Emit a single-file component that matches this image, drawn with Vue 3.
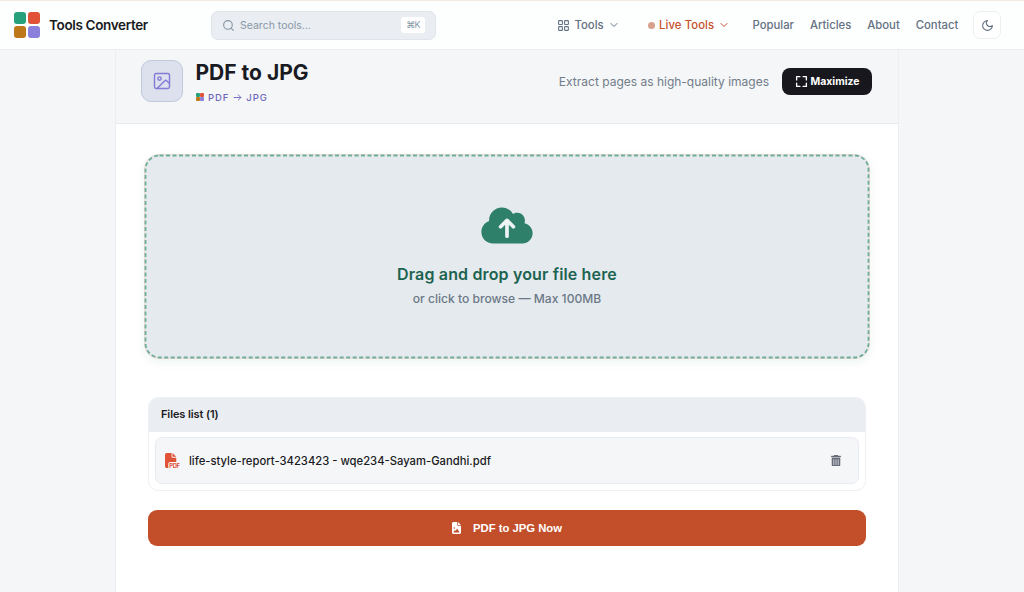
<template>
  <div class="page">
    <!-- Top navigation -->
    <header class="navbar">
      <div class="brand">
        <div class="logo"><i class="green"></i><i class="red"></i><i class="amber"></i><i class="violet"></i></div>
        <span class="brand-name">Tools Converter</span>
      </div>

      <div class="search">
        <svg class="search-icon" viewBox="0 0 24 24"><circle cx="11" cy="11" r="8" /><path d="m21 21-4.3-4.3" /></svg>
        <span class="search-text">Search tools...</span>
        <kbd>⌘K</kbd>
      </div>

      <nav>
        <a class="nav-tools">
          <svg class="grid-icon" viewBox="0 0 24 24">
            <rect x="3" y="3" width="7" height="7" rx="1" /><rect x="14" y="3" width="7" height="7" rx="1" />
            <rect x="3" y="14" width="7" height="7" rx="1" /><rect x="14" y="14" width="7" height="7" rx="1" />
          </svg>
          <span>Tools</span>
          <svg class="chevron" viewBox="0 0 24 24"><path d="m6 9 6 6 6-6" /></svg>
        </a>
        <a class="nav-live">
          <i class="dot"></i>
          <span>Live Tools</span>
          <svg class="chevron" viewBox="0 0 24 24"><path d="m6 9 6 6 6-6" /></svg>
        </a>
        <a v-for="link in links" :key="link" class="nav-link">{{ link }}</a>
      </nav>

      <button class="theme">
        <svg viewBox="0 0 24 24"><path d="M12 3a6 6 0 0 0 9 9 9 9 0 1 1-9-9Z" /></svg>
      </button>
    </header>

    <main class="panel">
      <!-- Tool title bar -->
      <section class="tool-header">
        <div class="tool-icon">
          <svg viewBox="0 0 24 24">
            <rect x="3" y="3" width="18" height="18" rx="2" /><circle cx="9" cy="9" r="2" />
            <path d="m21 15-3.1-3.1a2 2 0 0 0-2.8 0L6 21" />
          </svg>
        </div>
        <div class="tool-title">
          <h1>PDF to JPG</h1>
          <div class="route">
            <div class="logo small"><i class="green"></i><i class="red"></i><i class="amber"></i><i class="violet"></i></div>
            <span>PDF</span>
            <svg viewBox="0 0 24 24"><path d="M3 12h18m-7-7 7 7-7 7" /></svg>
            <span>JPG</span>
          </div>
        </div>
        <p class="tool-desc">Extract pages as high-quality images</p>
        <button class="maximize">
          <svg viewBox="0 0 24 24"><path d="M3 9V3h6M15 3h6v6M21 15v6h-6M9 21H3v-6" /></svg>
          <span>Maximize</span>
        </button>
      </section>

      <section class="tool-body">
        <!-- Drop zone -->
        <div class="dropzone">
          <svg class="dash" width="726" height="205"><rect x="1.5" y="1.5" width="723" height="202" rx="14" /></svg>
          <svg class="cloud" viewBox="0 0 640 512">
            <path d="M144 480C64.500 480 0 415.500 0 336c0-62.800 40.200-116.200 96.200-135.900-.1-2.700-.2-5.400-.2-8.100 0-88.400 71.600-160 160-160 59.300 0 111 32.200 138.700 80.200C409.900 102 428.300 96 448 96c53 0 96 43 96 96 0 12.200-2.300 23.800-6.400 34.600C596 238.400 640 290.100 640 352c0 70.700-57.300 128-128 128H144z" />
            <path class="arrow" d="M320 390V192m-80 80 80-80 80 80" />
          </svg>
          <h2>Drag and drop your file here</h2>
          <p>or click to browse — Max 100MB</p>
        </div>

        <!-- Selected files -->
        <div class="files">
          <div class="files-head">Files list ({{ files.length }})</div>
          <div v-for="file in files" :key="file" class="file-row">
            <svg class="pdf" viewBox="0 0 512 512">
              <path d="M0 64C0 28.700 28.700 0 64 0h160v128c0 17.700 14.300 32 32 32h128v144H176c-35.300 0-64 28.700-64 64v144H64c-35.300 0-64-28.700-64-64V64zm384 64H256V0z" />
              <text x="148" y="510" textLength="364">PDF</text>
            </svg>
            <span class="file-name">{{ file }}</span>
            <svg class="trash" viewBox="0 0 448 512">
              <path d="M135 18c5-11 16-18 29-18h120c13 0 24 7 29 18l7 14h96c18 0 32 14 32 32s-14 32-32 32H32C14 96 0 82 0 64s14-32 32-32h96zM32 128h384v320c0 35-29 64-64 64H96c-35 0-64-29-64-64zm96 64c-9 0-16 7-16 16v224a16 16 0 0 0 32 0V208c0-9-7-16-16-16zm96 0c-9 0-16 7-16 16v224a16 16 0 0 0 32 0V208c0-9-7-16-16-16zm96 0c-9 0-16 7-16 16v224a16 16 0 0 0 32 0V208c0-9-7-16-16-16z" />
            </svg>
          </div>
        </div>

        <button class="convert">
          <svg viewBox="0 0 384 512">
            <path fill-rule="evenodd" d="M64 0C29 0 0 29 0 64v384c0 35 29 64 64 64h256c35 0 64-29 64-64V160H256c-18 0-32-14-32-32V0zm192 0v128h128zM64 256a32 32 0 1 1 64 0 32 32 0 1 1-64 0zm152 32c5 0 11 3 14 7l86 127c9 12 0 26-14 26H80c-14 0-22-15-13-27l48-64c6-8 19-8 26 0l17 22 44-84c3-4 9-7 14-7z" />
          </svg>
          <span>PDF to JPG Now</span>
        </button>
      </section>
    </main>
  </div>
</template>

<script setup>
import { ref } from 'vue'

const links = ['Popular', 'Articles', 'About', 'Contact']

// Files waiting to be converted
const files = ref(['life-style-report-3423423 - wqe234-Sayam-Gandhi.pdf'])
</script>

<style>
body {
  margin: 0;
  background: #f5f6f8;
  overflow: hidden;
}
</style>

<style scoped>
.page {
  height: 592px;
  box-sizing: border-box;
  overflow: hidden;
  background: #f5f6f8;
  font-family: Inter, sans-serif;
  color: #191a22;
}

.page * {
  box-sizing: border-box;
}

svg {
  fill: none;
  stroke: currentColor;
  stroke-width: 2;
  stroke-linecap: round;
  stroke-linejoin: round;
  flex: none;
  display: block;
}

button {
  border: 0;
  padding: 0;
  font-family: inherit;
  display: flex;
  align-items: center;
  justify-content: center;
}

/* Navbar */
.navbar {
  height: 50px;
  background: #fdfefe;
  border-top: 1px solid #f5e9e2;
  border-bottom: 1px solid #e9ecf0;
  display: flex;
  align-items: center;
  padding: 0 23px 0 14px;
}

.brand {
  display: flex;
  align-items: center;
  width: 197px;
  gap: 9px;
}

.logo {
  display: grid;
  grid-template-columns: 12px 12px;
  grid-auto-rows: 12px;
  gap: 2px;
}

.logo i {
  border-radius: 3px;
}

.green { background: #26a17b; }
.red { background: #e05336; }
.amber { background: #be7719; }
.violet { background: #8a7fda; }

.brand-name {
  font-size: 13.500px;
  font-weight: 600;
  letter-spacing: -0.35px;
  white-space: nowrap;
}

.search {
  width: 225px;
  height: 29px;
  border: 1px solid #dfe4ea;
  border-radius: 7px;
  background: #eaedf2;
  display: flex;
  align-items: center;
  padding: 0 10px;
  color: #8797a5;
  font-size: 10.500px;
}

.search-icon {
  width: 13px;
  margin-right: 5px;
}

.search-text {
  flex: 1;
}

kbd {
  width: 24px;
  height: 16px;
  line-height: 16px;
  background: #fff;
  border-radius: 3px;
  text-align: center;
  font-family: Inter, sans-serif;
  font-size: 9px;
  letter-spacing: -0.9px;
}

nav {
  display: flex;
  align-items: center;
  margin-left: 121px;
  flex: 1;
  gap: 16px;
  color: #647283;
  font-size: 11.300px;
  font-weight: 500;
  white-space: nowrap;
}

nav a {
  display: flex;
  align-items: center;
}

.nav-tools {
  width: 75px;
}

.grid-icon {
  width: 13px;
  margin-right: 4.500px;
}

.chevron {
  width: 12px;
  margin-left: 4px;
}

.nav-live {
  width: 88.500px;
  color: #c6502c;
}

.nav-live span {
  letter-spacing: 0.1px;
}

.dot {
  width: 7px;
  height: 7px;
  border-radius: 50%;
  background: #d7a08c;
  margin-right: 4px;
}

.theme {
  width: 28px;
  height: 28px;
  border: 1px solid #eceff2;
  border-radius: 7px;
  background: #fff;
  color: #647283;
}

.theme svg {
  width: 13px;
}

/* Panel */
.panel {
  width: 784px;
  height: 542px;
  margin-left: 115px;
  background: #fff;
  border: solid #eceef1;
  border-width: 0 1px;
}

.tool-header {
  height: 74px;
  background: #f5f6f8;
  border-bottom: 1px solid #e8eaee;
  display: flex;
  align-items: center;
  padding: 0 26px 11px 25px;
}

.tool-icon {
  width: 42px;
  height: 42px;
  border: 1px solid #bfcbdc;
  border-radius: 10px;
  background: #dde0ed;
  color: #857bd7;
  display: flex;
  align-items: center;
  justify-content: center;
}

.tool-icon svg {
  width: 20px;
  stroke-width: 1.700;
}

.tool-title {
  margin-left: 12.500px;
  flex: 1;
}

h1 {
  margin: 1px 0 0;
  font-size: 21px;
  line-height: 26px;
  font-weight: 700;
}

.route {
  display: flex;
  align-items: center;
  gap: 4px;
  margin-top: 5px;
  height: 12px;
  color: #6f67bc;
  font-size: 9.500px;
  font-weight: 500;
  letter-spacing: 0.9px;
}

.route svg {
  width: 9px;
  stroke-width: 2.500;
}

.logo.small {
  grid-template-columns: 4px 4px;
  grid-auto-rows: 4px;
  gap: 0.5px;
}

.logo.small i {
  border-radius: 1px;
}

.tool-desc {
  margin: 0 13px 0 0;
  color: #717c89;
  font-size: 12px;
}

.maximize {
  width: 90px;
  height: 27px;
  border-radius: 8px;
  background: #17171d;
  color: #fff;
  font-size: 10.400px;
  font-weight: 700;
  gap: 3px;
}

.maximize svg {
  width: 13px;
  stroke-width: 2.500;
}

.tool-body {
  padding: 30px 28px 0;
}

/* Drop zone: the dashed outline is drawn on top of the box */
.dropzone {
  position: relative;
  width: 726px;
  height: 205px;
  border: 1px solid #ecdcd6;
  border-radius: 15px;
  background: #e5eaee;
  box-shadow: 0 3px 10px rgba(38, 128, 90, 0.09);
  display: flex;
  flex-direction: column;
  align-items: center;
  padding-top: 50px;
}

.dash {
  position: absolute;
  top: -1px;
  left: -1px;
}

.dash rect {
  stroke: #70ad99;
  stroke-width: 1.800;
  stroke-linecap: butt;
  stroke-dasharray: 4 2.500;
}

.cloud {
  width: 52px;
  height: 41px;
  fill: #2f806b;
  stroke: none;
}

.cloud .arrow {
  fill: none;
  stroke: #eef3f4;
  stroke-width: 46;
}

h2 {
  margin: 17px 0 0;
  font-size: 16px;
  line-height: 22px;
  font-weight: 600;
  letter-spacing: 0.15px;
  color: #1c6350;
}

.dropzone p {
  margin: 6px 0 0;
  font-size: 12.100px;
  line-height: 16px;
  color: #6b7886;
  font-weight: 500;
}

/* Files */
.files {
  width: 718px;
  height: 94px;
  margin: 38px 0 0 4px;
  border: 1px solid #eef0f3;
  border-radius: 10px;
  overflow: hidden;
}

.files-head {
  height: 33.500px;
  line-height: 33px;
  padding-left: 12px;
  background: #eaedf2;
  font-size: 11px;
  font-weight: 600;
  letter-spacing: -0.1px;
}

.file-row {
  height: 47px;
  margin: 5.500px 6px 0 5.500px;
  border: 1px solid #e8ebef;
  border-radius: 7px;
  background: #f5f6f8;
  display: flex;
  align-items: center;
  padding: 0 17.500px 0 9px;
}

.pdf {
  width: 15px;
  fill: #e05336;
  stroke: none;
  overflow: visible;
}

.pdf text {
  font-size: 200px;
  font-weight: 700;
}

.file-name {
  flex: 1;
  margin-left: 9.500px;
  font-size: 11.250px;
  font-weight: 500;
}

.trash {
  width: 10px;
  fill: #686c78;
  stroke: none;
}

.convert {
  width: 718px;
  height: 36px;
  margin: 19px 0 0 4px;
  border-radius: 9px;
  background: #c34f2a;
  color: #fff;
  font-family: "Liberation Sans", Arial, sans-serif;
  font-size: 11.300px;
  font-weight: 700;
  gap: 12px;
}

.convert svg {
  width: 9px;
  fill: #fff;
  stroke: none;
}
</style>
